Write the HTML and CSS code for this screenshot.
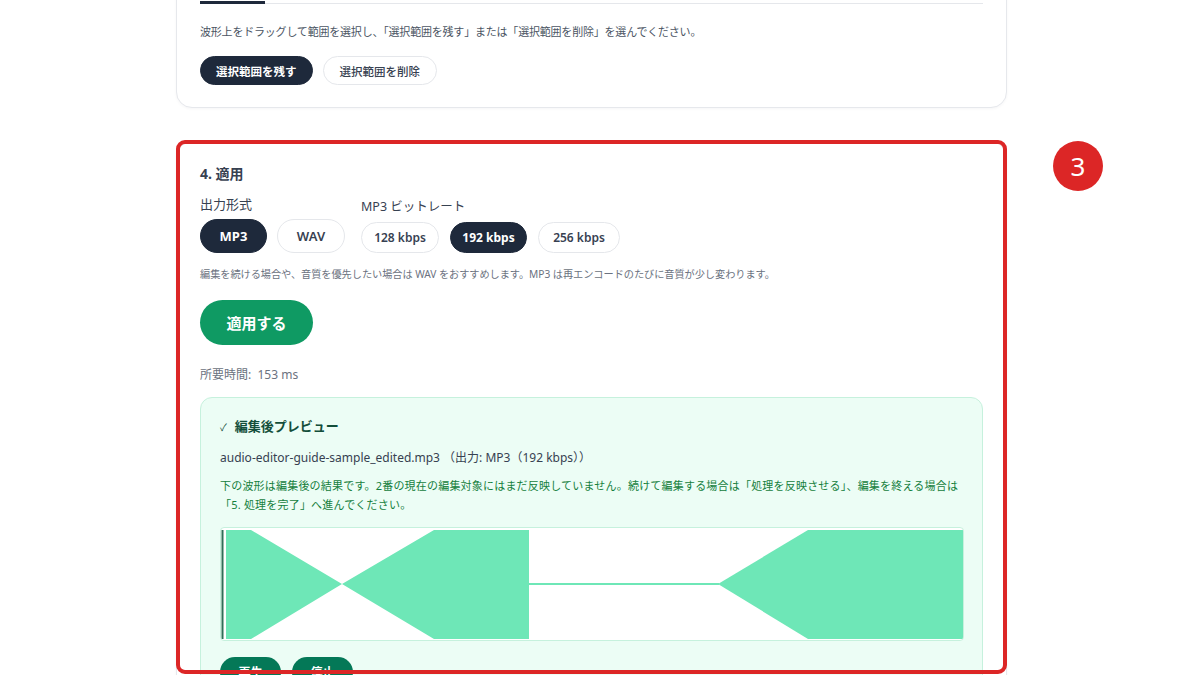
FILE: index.html
```html
<!DOCTYPE html>
<html lang="ja">
<head>
<meta charset="utf-8">
<title>音声エディタ</title>
<link rel="stylesheet" href="styles.css">
</head>
<body>
<main class="page">
  <section class="card card-trim">
    <div class="tabs">
      <span class="tab active"></span>
      <span class="tab"></span>
    </div>
    <p class="hint">波形上をドラッグして範囲を選択し、「選択範囲を残す」または「選択範囲を削除」を選んでください。</p>
    <div class="btn-row">
      <button class="pill pill-sm dark">選択範囲を残す</button>
      <button class="pill pill-sm light">選択範囲を削除</button>
    </div>
  </section>

  <section class="card card-apply">
    <div class="highlight"></div>
    <div class="badge">3</div>
    <h3 class="step-title">4. 適用</h3>
    <div class="options">
      <div class="group">
        <div class="group-label">出力形式</div>
        <div class="pills">
          <button class="pill pill-fmt dark">MP3</button>
          <button class="pill pill-fmt light">WAV</button>
        </div>
      </div>
      <div class="group">
        <div class="group-label">MP3 ビットレート</div>
        <div class="pills">
          <button class="pill pill-rate light">128 kbps</button>
          <button class="pill pill-rate dark">192 kbps</button>
          <button class="pill pill-rate light">256 kbps</button>
        </div>
      </div>
    </div>
    <p class="note">編集を続ける場合や、音質を優先したい場合は WAV をおすすめします。MP3 は再エンコードのたびに音質が少し変わります。</p>
    <button class="apply-btn">適用する</button>
    <p class="elapsed">所要時間:&nbsp; 153 ms</p>

    <div class="preview">
      <div class="preview-title"><span class="check">✓</span>編集後プレビュー</div>
      <div class="filename">audio-editor-guide-sample_edited.mp3 （出力: MP3（192 kbps））</div>
      <p class="preview-desc"><span class="nowrap">下の波形は編集後の結果です。2番の現在の編集対象にはまだ反映していません。続けて編集する場合は「処理を反映させる」、編集を終える場合は</span><br>「5. 処理を完了」へ進んでください。</p>
      <div class="wave">
        <svg width="743" height="113" viewBox="0 0 743 113">
          <polygon fill="#6ee7b7" points="5,2 30,2 121,56 213,2 308,2 308,111 213,111 121,56 30,111 5,111"/>
          <line x1="308" y1="56" x2="498" y2="56" stroke="#6ee7b7" stroke-width="2"/>
          <polygon fill="#6ee7b7" points="497,56 587,2 742,2 742,111 587,111"/>
          <line x1="1.5" y1="2" x2="1.5" y2="111" stroke="#2f6f57" stroke-width="2"/>
        </svg>
      </div>
      <div class="btn-row play-row">
        <button class="pill green-dark">再生</button>
        <button class="pill green-dark">停止</button>
      </div>
    </div>
  </section>
</main>
</body>
</html>
```

FILE: styles.css
```css
* { box-sizing: border-box; }
html, body { margin: 0; padding: 0; background: #ffffff; overflow: hidden; }
body {
  font-family: "Noto Sans", "Noto Sans CJK JP", sans-serif;
  color: #1f2937;
  width: 1200px;
  height: 675px;
}
.page {
  width: 831px;
  margin-left: 176px;
  display: flex;
  flex-direction: column;
}
.card {
  background: #fff;
  border: 1px solid #e6e8ec;
  border-radius: 16px;
  padding: 24px 23px;
  box-shadow: 0 1px 3px rgba(15, 23, 42, 0.04);
}
.card-trim {
  margin-top: -57px;
  padding-bottom: 22px;
}
.tabs {
  height: 36px;
  border-bottom: 1px solid #e5e7eb;
  display: flex;
  align-items: flex-end;
}
.tab {
  display: block;
  width: 65px;
  height: 36px;
  margin-bottom: -1px;
}
.tab.active {
  border-bottom: 3px solid #1e293b;
}
.hint {
  margin: 19px 0 0;
  font-size: 11px;
  line-height: 18px;
  color: #4b5563;
  letter-spacing: -0.2px;
}
.btn-row { display: flex; gap: 10px; margin-top: 15px; }
.pill {
  font-family: inherit;
  border-radius: 999px;
  border: 1px solid transparent;
  font-weight: 700;
  cursor: pointer;
  padding: 0;
}
.pill-sm { height: 29px; font-size: 11.5px; padding: 0 15px; }
.card-trim .pill-sm.light { padding: 0 16px; }
.dark { background: #1e293b; color: #fff; border-color: #1e293b; }
.light { background: #fff; color: #374151; border-color: #e5e7eb; font-weight: 600; }
.card-trim .light { font-weight: 500; }

.card-apply {
  position: relative;
  margin-top: 33px;
  padding-top: 23px;
  height: 600px;
}
.highlight {
  position: absolute;
  top: -2px;
  left: -1px;
  right: -1px;
  height: 534px;
  border: 4px solid #dc2626;
  border-radius: 9px;
  pointer-events: none;
  z-index: 2;
}
.badge {
  position: absolute;
  top: -1px;
  left: 876px;
  width: 50px;
  height: 50px;
  border-radius: 50%;
  background: #dc2626;
  color: #fff;
  font-size: 26px;
  line-height: 50px;
  text-align: center;
  font-family: "Noto Sans", sans-serif;
}
.step-title {
  margin: 0;
  font-size: 14px;
  line-height: 18px;
  font-weight: 700;
  color: #374151;
}
.options {
  display: flex;
  align-items: flex-end;
  gap: 16px;
  margin-top: 13px;
}
.group-label {
  font-size: 13px;
  line-height: 16px;
  color: #374151;
  margin-bottom: 7px;
}
.group:nth-child(2) .group-label { font-size: 12.5px; }
.pills { display: flex; gap: 10px; }
.pill-fmt { height: 34px; font-size: 13px; }
.pill-fmt.dark { width: 67px; }
.pill-fmt.light { width: 68px; }
.pill-rate { height: 31px; font-size: 12px; width: 78px; }
.pills .pill-rate:nth-child(2) { width: 77px; }
.pills .pill-rate:nth-child(3) { width: 82px; }
.group:nth-child(2) .pills { gap: 11px; }
.note {
  margin: 13px 0 0;
  font-size: 10.2px;
  line-height: 16px;
  color: #6b7280;
  letter-spacing: -0.05px;
}
.apply-btn {
  margin-top: 18px;
  width: 113px;
  height: 45px;
  border-radius: 999px;
  border: none;
  background: #0f9a63;
  color: #fff;
  font-family: inherit;
  font-size: 15px;
  font-weight: 700;
  display: block;
}
.elapsed {
  margin: 21px 0 0;
  font-size: 12px;
  line-height: 18px;
  color: #6b7280;
}
.preview {
  margin-top: 13px;
  background: #ecfdf5;
  border: 1px solid #c6f1dd;
  border-radius: 12px;
  padding: 19px 20px 20px 19px;
}
.preview-title {
  font-size: 13px;
  line-height: 18px;
  font-weight: 700;
  color: #134e3a;
}
.check { font-size: 10px; font-weight: 400; margin-right: 8px; color: #134e3a; }
.filename {
  margin-top: 13px;
  font-size: 12px;
  line-height: 18px;
  color: #374151;
}
.preview-desc {
  margin: 9px 0 0;
  font-size: 11px;
  line-height: 19px;
  color: #15803d;
  letter-spacing: 0.2px;
}
.nowrap { white-space: nowrap; }
.wave {
  margin-top: 13px;
  width: 744px;
  height: 114px;
  background: #fff;
  border: 1px solid #c6f1dd;
  border-radius: 4px;
  overflow: hidden;
}
.wave svg { display: block; }
.play-row { margin-top: 16px; gap: 11px; }
.green-dark {
  width: 61px;
  height: 30px;
  background: #047857;
  color: #fff;
  font-size: 12px;
}
```
